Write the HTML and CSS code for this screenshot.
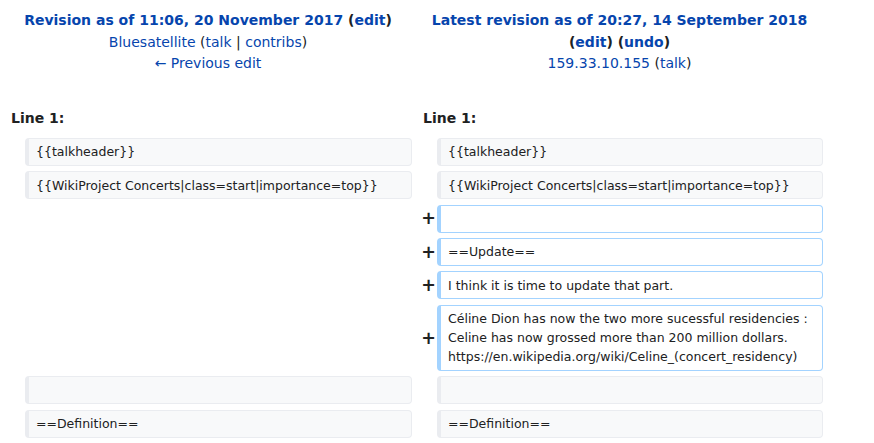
FILE: index.html
```html
<!DOCTYPE html>
<html lang="en">
<head>
<meta charset="utf-8">
<title>Diff</title>
<link rel="stylesheet" href="styles.css">
</head>
<body>
<div class="diff">
  <div class="title title-old">
    <div><strong><a class="lnk">Revision as of 11:06, 20 November 2017</a> (<a class="lnk">edit</a>)</strong></div>
    <div><a class="lnk">Bluesatellite</a> (<a class="lnk">talk</a> | <a class="lnk">contribs</a>)</div>
    <div><a class="lnk">← Previous edit</a></div>
  </div>
  <div class="title title-new">
    <div><strong><a class="lnk">Latest revision as of 20:27, 14 September 2018</a> (<a class="lnk">edit</a>) (<a class="lnk">undo</a>)</strong></div>
    <div><a class="lnk">159.33.10.155</a> (<a class="lnk">talk</a>)</div>
  </div>

  <div class="lineno lineno-old">Line 1:</div>
  <div class="lineno lineno-new">Line 1:</div>

  <div class="marker"></div>
  <div class="cell context">{{talkheader}}</div>
  <div class="marker"></div>
  <div class="cell context">{{talkheader}}</div>

  <div class="marker"></div>
  <div class="cell context">{{WikiProject Concerts|class=start|importance=top}}</div>
  <div class="marker"></div>
  <div class="cell context">{{WikiProject Concerts|class=start|importance=top}}</div>

  <div class="marker"></div>
  <div class="empty"></div>
  <div class="marker plus">+</div>
  <div class="cell added"></div>

  <div class="marker"></div>
  <div class="empty"></div>
  <div class="marker plus">+</div>
  <div class="cell added">==Update==</div>

  <div class="marker"></div>
  <div class="empty"></div>
  <div class="marker plus">+</div>
  <div class="cell added">I think it is time to update that part.</div>

  <div class="marker"></div>
  <div class="empty"></div>
  <div class="marker plus">+</div>
  <div class="cell added">Céline Dion has now the two more sucessful residencies : Celine has now grossed more than 200 million dollars. https://en.wikipedia.org/wiki/Celine_(concert_residency)</div>

  <div class="marker"></div>
  <div class="cell context"></div>
  <div class="marker"></div>
  <div class="cell context"></div>

  <div class="marker"></div>
  <div class="cell context">==Definition==</div>
  <div class="marker"></div>
  <div class="cell context">==Definition==</div>
</div>
</body>
</html>
```

FILE: styles.css
```css
html, body {
  margin: 0;
  padding: 0;
  background: #ffffff;
}
body {
  font-family: "DejaVu Sans", sans-serif;
  font-size: 14px;
  color: #202122;
}
.diff {
  display: grid;
  grid-template-columns: 17px 387px 17px 386px;
  column-gap: 4px;
  row-gap: 5.4px;
  padding: 10px 4px 0 4px;
  width: 827px;
  box-sizing: border-box;
}
.lnk {
  color: #0645ad;
  text-decoration: none;
}
.title {
  grid-column: span 2;
  text-align: center;
  line-height: 21.5px;
  margin-bottom: 28px;
}
.title strong {
  font-weight: bold;
}
.lineno {
  grid-column: span 2;
  font-weight: bold;
  line-height: 21.5px;
  padding-left: 7px;
  margin-bottom: 3px;
}
.marker {
  display: flex;
  justify-content: flex-end;
  align-items: center;
}
.plus {
  font-size: 17.5px;
  font-weight: bold;
  line-height: 1;
  margin-right: -3px;
  padding-top: 1px;
}
.cell {
  font-size: 12.5px;
  line-height: 19.2px;
  padding: 3.4px 7px 3.4px 7px;
  border-style: solid;
  border-width: 1px 1px 1px 4px;
  border-radius: 4px;
  min-height: 19.2px;
  white-space: pre-wrap;
  word-wrap: break-word;
}
.context {
  background: #f8f9fa;
  border-color: #eaecf0;
}
.added {
  background: #ffffff;
  border-color: #a3d3ff;
}
```
